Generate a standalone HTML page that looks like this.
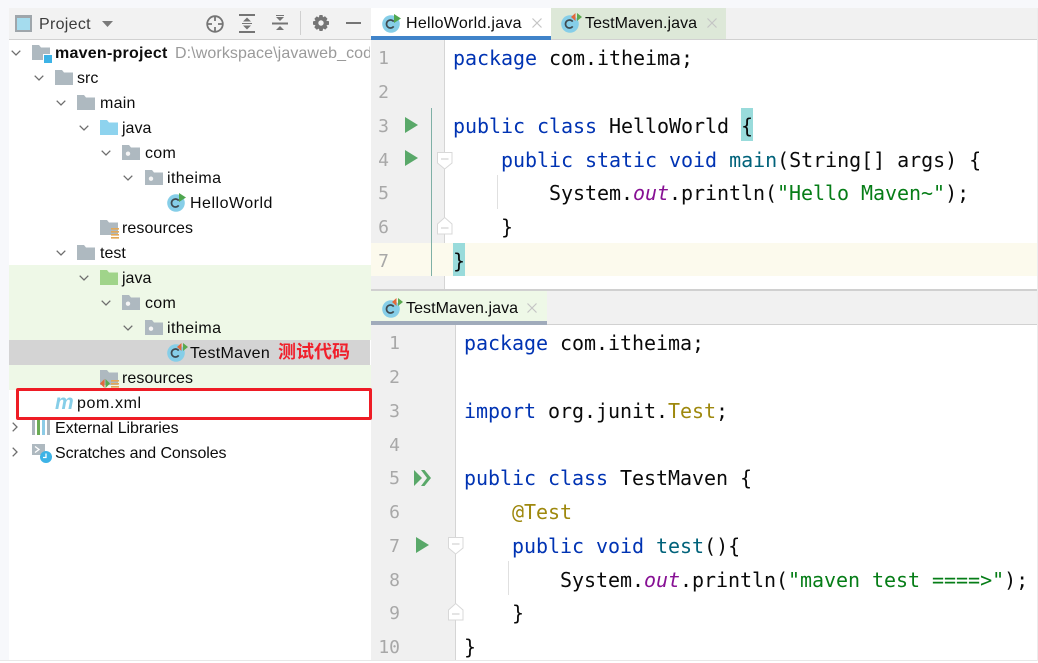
<!DOCTYPE html>
<html lang="zh"><head><meta charset="utf-8"><title>maven-project</title>
<style>
html,body{margin:0;padding:0}
body{width:1038px;height:661px;position:relative;overflow:hidden;background:#fff;font-family:"Liberation Sans","Noto Sans CJK SC",sans-serif}
.b{position:absolute}
.t{position:absolute;font-size:16px;line-height:24px;height:24px;color:#0c0c0c;white-space:nowrap}
.c{position:absolute;font-family:"DejaVu Sans Mono","Liberation Mono",monospace;font-size:20px;line-height:30px;height:30px;color:#0a0a0a;white-space:pre;letter-spacing:-.04px}
.n{position:absolute;font-family:"DejaVu Sans Mono",monospace;font-size:18px;line-height:30px;height:30px;color:#a8a8a8;text-align:right;white-space:pre}
.k{color:#0033b3}.f{color:#00627a}.s{color:#067d17}.o{color:#871094;font-style:italic}.a{color:#9e880d}
svg{position:absolute;overflow:visible}
</style></head><body>
<svg width="0" height="0" style="position:absolute"><defs>
<symbol id="fo" viewBox="0 0 18 15"><path d="M0 0H7L9 2.5H18V15H0Z"/></symbol>
<symbol id="ch" viewBox="0 0 10 6"><path d="M.7.7L5 5 9.3.7" fill="none" stroke="#6e6e6e" stroke-width="1.3"/></symbol>
<symbol id="pk" viewBox="0 0 18 15"><path d="M0 0H7L9 2.5H18V15H0Z" fill="#aeb9c0"/><circle cx="6" cy="8.7" r="2.2" fill="#f5f5f5"/></symbol>
<symbol id="cl" viewBox="0 0 18 18"><circle cx="9" cy="9" r="8.8" fill="#86cee8"/><path d="M11.7 6.6A4 4 0 1 0 11.7 11.4" fill="none" stroke="#3f4a50" stroke-width="1.7"/></symbol>
</defs></svg>

<!-- outer background -->
<div class="b" style="left:0;top:0;width:1038px;height:8px;background:#f7f8fb"></div>
<div class="b" style="left:0;top:0;width:9px;height:661px;background:#f7f8fb"></div>

<!-- project header -->
<div class="b" style="left:9px;top:8px;width:362px;height:31px;background:#f2f2f2;border-bottom:1px solid #d1d1d1"></div>
<div class="b" style="left:15px;top:15px;width:13px;height:12px;background:#a5dcee;border:2px solid #9fa6ab;border-top-width:3px"></div>
<div class="t" style="left:39px;top:13px;color:#3c3c3c;letter-spacing:.3px">Project</div>
<svg style="left:102px;top:21px" width="11" height="6"><path d="M0 0H11L5.5 6Z" fill="#7a7a7a"/></svg>
<svg style="left:206px;top:15px" width="18" height="18" fill="none" stroke="#757575" stroke-width="1.8"><circle cx="9" cy="9" r="7.8"/><path d="M9 1V6M9 12V17M1 9H6M12 9H17"/></svg>
<svg style="left:239px;top:14px" width="16" height="19" fill="#757575"><path d="M0 0H16V2H0ZM0 17H16V19H0ZM8 3.5L12 7.5H4ZM8 15.5L4 11.5H12Z"/><path d="M3 9H13V10H3Z"/></svg>
<svg style="left:272px;top:15px" width="16" height="17" fill="#757575"><path d="M0 7.5H16V9.5H0ZM8 6L4 2H12ZM8 11L12 15H4Z"/><path d="M4 0H12V1H4Z"/></svg>
<div class="b" style="left:300px;top:11px;width:1px;height:24px;background:#d0d0d0"></div>
<svg style="left:313px;top:15px" width="16" height="16" viewBox="0 0 16 16"><path d="M6.5 0H9.5L10 2.3 12 1.3 14.5 3.7 13.3 5.7 16 6.3V9.7L13.5 10.3 14.6 12.3 12.3 14.6 10.2 13.5 9.5 16H6.5L5.9 13.6 3.7 14.7 1.3 12.3 2.5 10.2 0 9.6V6.4L2.5 5.8 1.4 3.7 3.7 1.4 5.8 2.5Z" fill="#757575"/><circle cx="8" cy="8" r="2.7" fill="#f2f2f2"/></svg>
<div class="b" style="left:346px;top:22px;width:15px;height:2px;background:#757575"></div>

<!-- tree row backgrounds -->
<div class="b" style="left:9px;top:265px;width:362px;height:75px;background:#eef8e7"></div>
<div class="b" style="left:9px;top:340px;width:361px;height:25px;background:#d4d4d4"></div>
<div class="b" style="left:9px;top:365px;width:362px;height:25px;background:#eef8e7"></div>

<!-- chevrons -->
<svg style="left:11px;top:50px" width="10" height="6"><use href="#ch"/></svg>
<svg style="left:34px;top:75px" width="10" height="6"><use href="#ch"/></svg>
<svg style="left:56px;top:100px" width="10" height="6"><use href="#ch"/></svg>
<svg style="left:79px;top:125px" width="10" height="6"><use href="#ch"/></svg>
<svg style="left:101px;top:150px" width="10" height="6"><use href="#ch"/></svg>
<svg style="left:123px;top:175px" width="10" height="6"><use href="#ch"/></svg>
<svg style="left:56px;top:250px" width="10" height="6"><use href="#ch"/></svg>
<svg style="left:79px;top:275px" width="10" height="6"><use href="#ch"/></svg>
<svg style="left:101px;top:300px" width="10" height="6"><use href="#ch"/></svg>
<svg style="left:123px;top:325px" width="10" height="6"><use href="#ch"/></svg>
<svg style="left:12px;top:422px" width="6" height="10"><path d="M.7.7L5 5 .7 9.3" fill="none" stroke="#6e6e6e" stroke-width="1.3"/></svg>
<svg style="left:12px;top:447px" width="6" height="10"><path d="M.7.7L5 5 .7 9.3" fill="none" stroke="#6e6e6e" stroke-width="1.3"/></svg>

<!-- tree icons -->
<svg style="left:32px;top:45px" width="18" height="15" fill="#aeb9c0"><use href="#fo"/></svg>
<div class="b" style="left:43px;top:54px;width:8px;height:8px;background:#3db3e6;border:1px solid #fff"></div>
<svg style="left:55px;top:70px" width="18" height="15" fill="#aeb9c0"><use href="#fo"/></svg>
<svg style="left:77px;top:95px" width="18" height="15" fill="#aeb9c0"><use href="#fo"/></svg>
<svg style="left:100px;top:120px" width="18" height="15" fill="#8ed3ee"><use href="#fo"/></svg>
<svg style="left:122px;top:145px" width="18" height="15"><use href="#pk"/></svg>
<svg style="left:145px;top:170px" width="18" height="15"><use href="#pk"/></svg>
<svg style="left:167px;top:194px" width="18" height="18"><use href="#cl"/></svg>
<svg style="left:179px;top:193px" width="8" height="9"><path d="M0 0L7 4.5 0 9Z" fill="#4fa64f"/></svg>
<svg style="left:100px;top:220px" width="18" height="15" fill="#aeb9c0"><use href="#fo"/></svg>
<svg style="left:111px;top:228px" width="8" height="10" fill="#e2a858"><path d="M0 0H8V1.6H0ZM0 3H8V4.6H0ZM0 6H8V7.6H0ZM0 9H8V10.6H0Z"/></svg>
<svg style="left:77px;top:245px" width="18" height="15" fill="#aeb9c0"><use href="#fo"/></svg>
<svg style="left:100px;top:270px" width="18" height="15" fill="#a0d48a"><use href="#fo"/></svg>
<svg style="left:122px;top:295px" width="18" height="15"><use href="#pk"/></svg>
<svg style="left:145px;top:320px" width="18" height="15"><use href="#pk"/></svg>
<svg style="left:167px;top:344px" width="18" height="18"><use href="#cl"/></svg>
<svg style="left:177px;top:343px" width="12" height="9"><path d="M4.5 0V8L0 4Z" fill="#e2683c"/><path d="M6 0L11 4 6 8Z" fill="#5aa84f"/></svg>
<svg style="left:100px;top:370px" width="18" height="15" fill="#aeb9c0"><use href="#fo"/></svg>
<svg style="left:100px;top:379px" width="20" height="10"><path d="M4.5 0V9L0 4.5Z" fill="#e2683c"/><path d="M5.5 0L10 4.5 5.5 9Z" fill="#5aa84f"/><path d="M11 1H19V2.6H11ZM11 4H19V5.6H11ZM11 7H19V8.6H11Z" fill="#e2a858"/></svg>
<svg style="left:32px;top:420px" width="19" height="15"><path d="M0 0H3V15H0Z" fill="#a9b4bb"/><path d="M5 0H8V15H5Z" fill="#6aab54"/><path d="M10 0H13V15H10Z" fill="#8ccbe6"/><path d="M15 0H18V15H15Z" fill="#a9b4bb"/></svg>
<svg style="left:32px;top:444px" width="20" height="20"><path d="M0 0H13V11H0Z" fill="#aeb9c0"/><path d="M3 2.5L7 5.5 3 8.5" fill="none" stroke="#fff" stroke-width="1.3"/><circle cx="14" cy="13" r="6" fill="#3db3e6"/><path d="M14 9.5V13.5H11" fill="none" stroke="#fff" stroke-width="1.3"/></svg>
<div class="b" style="left:55px;top:391px;font:italic bold 21px/24px 'Liberation Sans',sans-serif;color:#86cee8">m</div>

<!-- tree labels -->
<div class="t" style="left:55px;top:42px;font-weight:bold;letter-spacing:.25px">maven-project</div>
<div class="t" style="left:175px;top:42px;color:#9a9a9a;width:195px;overflow:hidden;letter-spacing:.1px">D:\workspace\javaweb_code</div>
<div class="t" style="left:77px;top:67px">src</div>
<div class="t" style="left:100px;top:92px;letter-spacing:.25px">main</div>
<div class="t" style="left:122px;top:117px">java</div>
<div class="t" style="left:145px;top:142px;letter-spacing:.3px">com</div>
<div class="t" style="left:167px;top:167px;letter-spacing:.4px">itheima</div>
<div class="t" style="left:190px;top:192px;letter-spacing:.5px">HelloWorld</div>
<div class="t" style="left:122px;top:217px;letter-spacing:.1px">resources</div>
<div class="t" style="left:100px;top:242px">test</div>
<div class="t" style="left:122px;top:267px">java</div>
<div class="t" style="left:145px;top:292px;letter-spacing:.3px">com</div>
<div class="t" style="left:167px;top:317px;letter-spacing:.4px">itheima</div>
<div class="t" style="left:190px;top:342px;letter-spacing:.3px">TestMaven</div>
<div class="t" style="left:278px;top:340px;color:#f0202c;font-weight:bold;font-size:18px">测试代码</div>
<div class="t" style="left:122px;top:367px;letter-spacing:.1px">resources</div>
<div class="t" style="left:77px;top:392px;letter-spacing:.6px">pom.xml</div>
<div class="t" style="left:55px;top:417px;letter-spacing:-.05px">External Libraries</div>
<div class="t" style="left:55px;top:442px;letter-spacing:-.09px">Scratches and Consoles</div>

<!-- top editor tabs -->
<div class="b" style="left:371px;top:8px;width:667px;height:31px;background:#f1f1f1;border-bottom:1px solid #d1d1d1"></div>
<div class="b" style="left:371px;top:8px;width:180px;height:28px;background:#fff"></div>
<div class="b" style="left:371px;top:36px;width:180px;height:4px;background:#4083c9"></div>
<div class="b" style="left:551px;top:8px;width:175px;height:31px;background:#dde8d8"></div>
<svg style="left:382px;top:15px" width="18" height="18"><use href="#cl"/></svg>
<svg style="left:394px;top:14px" width="8" height="9"><path d="M0 0L7 4.5 0 9Z" fill="#4fa64f"/></svg>
<div class="t" style="left:406px;top:12px;letter-spacing:.27px">HelloWorld.java</div>
<svg style="left:532px;top:18px" width="10" height="10" fill="none" stroke="#c4c4c4" stroke-width="1.2"><path d="M.5.5L9.5 9.5M9.5 .5L.5 9.5"/></svg>
<svg style="left:561px;top:15px" width="18" height="18"><use href="#cl"/></svg>
<svg style="left:571px;top:13px" width="12" height="9"><path d="M4.5 0V8L0 4Z" fill="#e2683c"/><path d="M6 0L11 4 6 8Z" fill="#5aa84f"/></svg>
<div class="t" style="left:585px;top:12px;letter-spacing:.07px">TestMaven.java</div>
<svg style="left:707px;top:18px" width="10" height="10" fill="none" stroke="#c4c4c4" stroke-width="1.2"><path d="M.5.5L9.5 9.5M9.5 .5L.5 9.5"/></svg>

<!-- top editor -->
<div class="b" style="left:371px;top:40px;width:73px;height:249px;background:#f0f0f0"></div>
<div class="b" style="left:444px;top:40px;width:1px;height:249px;background:#d5d5d5"></div>
<div class="b" style="left:371px;top:243px;width:667px;height:33px;background:#fcfaed"></div>
<div class="b" style="left:431px;top:108px;width:1px;height:168px;background:#7fb0a6"></div>
<div class="b" style="left:741px;top:108px;width:12px;height:33px;background:#99dbdb"></div>
<div class="b" style="left:453px;top:243px;width:12px;height:33px;background:#99dbdb"></div>
<div class="b" style="left:497px;top:175px;width:1px;height:34px;background:#e0e0e0"></div>

<div class="n" style="left:371px;width:18px;top:44px">1</div>
<div class="n" style="left:371px;width:18px;top:78px">2</div>
<div class="n" style="left:371px;width:18px;top:112px">3</div>
<div class="n" style="left:371px;width:18px;top:146px">4</div>
<div class="n" style="left:371px;width:18px;top:179px">5</div>
<div class="n" style="left:371px;width:18px;top:213px">6</div>
<div class="n" style="left:371px;width:18px;top:247px">7</div>
<svg style="left:405px;top:117px" width="13" height="16"><path d="M0 0L13 8 0 16Z" fill="#59a869"/></svg>
<svg style="left:405px;top:150px" width="13" height="16"><path d="M0 0L13 8 0 16Z" fill="#59a869"/></svg>
<svg style="left:437px;top:152px" width="16" height="18"><path d="M.5.5H15V11L7.7 17 .5 11Z" fill="#fff" stroke="#d8d8d8"/><path d="M4 7H11.5" stroke="#c8c8c8"/></svg>
<svg style="left:437px;top:217px" width="16" height="18"><path d="M.5 17H15V7L7.7 .5 .5 7Z" fill="#fff" stroke="#d8d8d8"/><path d="M4 11H11.5" stroke="#c8c8c8"/></svg>

<div class="c" style="left:453px;top:43px"><span class="k">package</span> com.itheima;</div>
<div class="c" style="left:453px;top:111px"><span class="k">public class</span> HelloWorld {</div>
<div class="c" style="left:453px;top:145px">    <span class="k">public static void</span> <span class="f">main</span>(String[] args) {</div>
<div class="c" style="left:453px;top:178px">        System.<span class="o">out</span>.println(<span class="s">"Hello Maven~"</span>);</div>
<div class="c" style="left:453px;top:212px">    }</div>
<div class="c" style="left:453px;top:246px">}</div>

<!-- splitter -->
<div class="b" style="left:371px;top:289px;width:667px;height:2px;background:#d0d0d0"></div>

<!-- bottom tabs -->
<div class="b" style="left:371px;top:291px;width:667px;height:33px;background:#f1f1f1;border-bottom:1px solid #d1d1d1"></div>
<div class="b" style="left:371px;top:291px;width:176px;height:30px;background:#eef8e7"></div>
<div class="b" style="left:371px;top:321px;width:176px;height:4px;background:#a0abbb"></div>
<svg style="left:382px;top:300px" width="18" height="18"><use href="#cl"/></svg>
<svg style="left:392px;top:298px" width="12" height="9"><path d="M4.5 0V8L0 4Z" fill="#e2683c"/><path d="M6 0L11 4 6 8Z" fill="#5aa84f"/></svg>
<div class="t" style="left:406px;top:297px;letter-spacing:.07px">TestMaven.java</div>
<svg style="left:527px;top:303px" width="10" height="10" fill="none" stroke="#c4c4c4" stroke-width="1.2"><path d="M.5.5L9.5 9.5M9.5 .5L.5 9.5"/></svg>

<!-- bottom editor -->
<div class="b" style="left:371px;top:325px;width:84px;height:336px;background:#f0f0f0"></div>
<div class="b" style="left:455px;top:325px;width:1px;height:336px;background:#d5d5d5"></div>
<div class="b" style="left:508px;top:561px;width:1px;height:34px;background:#e0e0e0"></div>

<div class="n" style="left:371px;width:29px;top:329px">1</div>
<div class="n" style="left:371px;width:29px;top:363px">2</div>
<div class="n" style="left:371px;width:29px;top:397px">3</div>
<div class="n" style="left:371px;width:29px;top:431px">4</div>
<div class="n" style="left:371px;width:29px;top:464px">5</div>
<div class="n" style="left:371px;width:29px;top:498px">6</div>
<div class="n" style="left:371px;width:29px;top:532px">7</div>
<div class="n" style="left:371px;width:29px;top:566px">8</div>
<div class="n" style="left:371px;width:29px;top:599px">9</div>
<div class="n" style="left:371px;width:29px;top:633px">10</div>
<svg style="left:414px;top:470px" width="17" height="16" fill="#59a869"><path d="M0 0L8 8 0 16Z"/><path d="M7 0H10.5L17 8 10.5 16H7L13 8Z"/></svg>
<svg style="left:416px;top:537px" width="13" height="16"><path d="M0 0L13 8 0 16Z" fill="#59a869"/></svg>
<svg style="left:448px;top:537px" width="16" height="18"><path d="M.5.5H15V11L7.7 17 .5 11Z" fill="#fff" stroke="#d8d8d8"/><path d="M4 7H11.5" stroke="#c8c8c8"/></svg>
<svg style="left:448px;top:603px" width="16" height="18"><path d="M.5 17H15V7L7.7 .5 .5 7Z" fill="#fff" stroke="#d8d8d8"/><path d="M4 11H11.5" stroke="#c8c8c8"/></svg>

<div class="c" style="left:464px;top:328px"><span class="k">package</span> com.itheima;</div>
<div class="c" style="left:464px;top:396px"><span class="k">import</span> org.junit.<span class="a">Test</span>;</div>
<div class="c" style="left:464px;top:463px"><span class="k">public class</span> TestMaven {</div>
<div class="c" style="left:464px;top:497px">    <span class="a">@Test</span></div>
<div class="c" style="left:464px;top:531px">    <span class="k">public void</span> <span class="f">test</span>(){</div>
<div class="c" style="left:464px;top:565px">        System.<span class="o">out</span>.println(<span class="s">"maven test ====&gt;"</span>);</div>
<div class="c" style="left:464px;top:598px">    }</div>
<div class="c" style="left:464px;top:632px">}</div>

<!-- red box (on top of editor edge) -->
<div class="b" style="left:16px;top:388px;width:350px;height:26px;border:3px solid #ee1c25;border-radius:2px"></div>

<!-- edges -->
<div class="b" style="left:0;top:660px;width:1038px;height:1px;background:#e8e8e8"></div>
<div class="b" style="left:1037px;top:8px;width:1px;height:653px;background:#ececec"></div>
</body></html>
